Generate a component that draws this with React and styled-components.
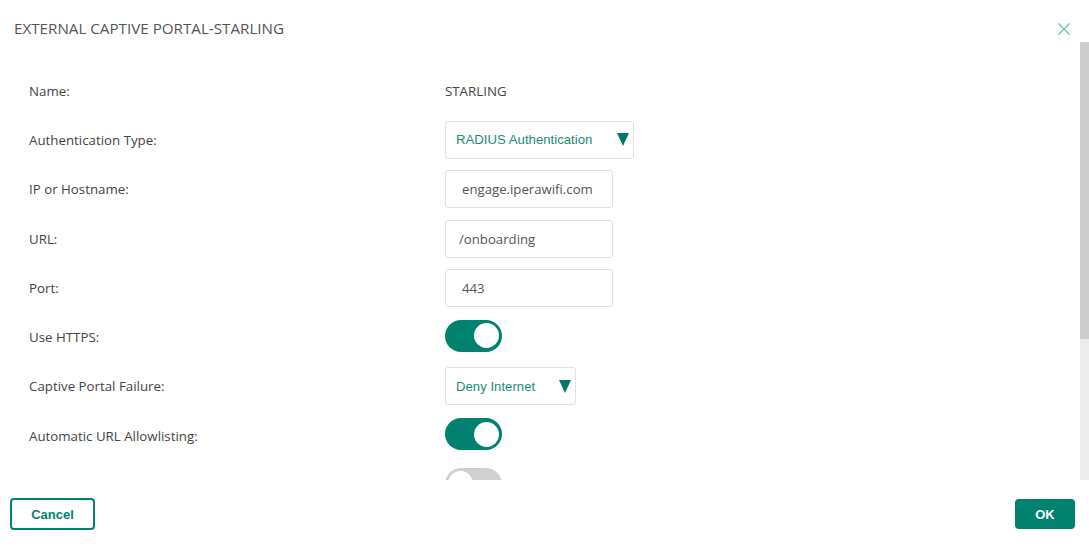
import React, { useState } from 'react'
import styled, { createGlobalStyle } from 'styled-components'

const GlobalStyle = createGlobalStyle`
  html, body {
    margin: 0;
    padding: 0;
    background: #fff;
    overflow: hidden;
  }
`

const teal = '#00826f'

const Dialog = styled.div`
  width: 1089px;
  height: 554px;
  display: flex;
  flex-direction: column;
  background: #fff;
  font-family: "Open Sans", "Liberation Sans", sans-serif;
`

const Header = styled.div`
  height: 42px;
  flex: none;
  display: flex;
  align-items: center;
  justify-content: space-between;
  padding: 0 18px 0 14px;
  box-sizing: border-box;
`

const Title = styled.h1`
  margin: 0;
  font-size: 15.2px;
  font-weight: 400;
  color: #555;
  padding-top: 14px;
`

const CloseButton = styled.button`
  border: 0;
  background: none;
  padding: 0;
  margin-top: 15px;
  width: 14px;
  height: 14px;
  display: flex;
  cursor: pointer;
`

const Content = styled.div`
  flex: 1;
  min-height: 0;
  display: flex;
`

const Body = styled.div`
  flex: 1;
  overflow: hidden;
  padding: 24px 0 0 29px;
  box-sizing: border-box;
`

const Rail = styled.div`
  width: 9px;
  flex: none;
  background: #ececec;
  display: flex;
  flex-direction: column;
`

const Thumb = styled.div`
  background: #cdcdcd;
`

const Form = styled.div`
  display: grid;
  grid-template-columns: 416px 1fr;
  grid-auto-rows: 49.3px;
`

const Label = styled.div`
  display: flex;
  align-items: center;
  font-size: 13.3px;
  color: #444;
`

const Field = styled.div`
  display: flex;
  align-items: center;
`

const Value = styled.span`
  font-size: 13.3px;
  color: #444;
`

const TextInput = styled.input`
  width: 168px;
  height: 38px;
  box-sizing: border-box;
  border: 1px solid #e0e0e0;
  border-radius: 3px;
  padding: 0 0 0 ${p => p.$indent || 16}px;
  font-family: "Open Sans", "Liberation Sans", sans-serif;
  font-size: 13.2px;
  color: #555;
  outline: none;
`

const SelectBox = styled.button`
  width: ${p => p.$width}px;
  height: 38px;
  box-sizing: border-box;
  border: 1px solid #e0e0e0;
  border-radius: 3px;
  background: #fff;
  padding: 0 4px 0 10px;
  display: flex;
  align-items: center;
  justify-content: space-between;
  font-family: "Liberation Sans", Arial, sans-serif;
  font-size: 13.2px;
  color: #1d8b7a;
  cursor: pointer;
`

const Caret = styled.span`
  width: 0;
  height: 0;
  border-left: 6px solid transparent;
  border-right: 6px solid transparent;
  border-top: 13px solid #00786a;
`

const Track = styled.span`
  width: 57px;
  height: 32px;
  margin-top: -3px;
  border-radius: 16px;
  background: ${p => (p.$on ? teal : '#d0d0d0')};
  display: flex;
  align-items: center;
  justify-content: ${p => (p.$on ? 'flex-end' : 'flex-start')};
  padding: 0 3px;
  box-sizing: border-box;
  cursor: pointer;
`

const Knob = styled.span`
  width: 25px;
  height: 25px;
  border-radius: 50%;
  background: #fff;
`

const Footer = styled.div`
  height: 74px;
  flex: none;
  display: flex;
  align-items: center;
  justify-content: space-between;
  padding: 0 14px 6px 10px;
  box-sizing: border-box;
`

const Button = styled.button`
  height: ${p => (p.$primary ? 30 : 32)}px;
  min-width: ${p => (p.$primary ? 60 : 85)}px;
  box-sizing: border-box;
  border-radius: 4px;
  border: 2px solid ${teal};
  background: ${p => (p.$primary ? teal : '#fff')};
  color: ${p => (p.$primary ? '#fff' : teal)};
  font-family: "Liberation Sans", Arial, sans-serif;
  font-weight: 700;
  font-size: 13px;
  cursor: pointer;
`

function Toggle({ on, onChange }) {
  return (
    <Track $on={on} onClick={() => onChange(!on)}>
      <Knob />
    </Track>
  )
}

function Select({ value, width }) {
  return (
    <SelectBox $width={width}>
      {value}
      <Caret />
    </SelectBox>
  )
}

const visibleShare = 0.678

export default function App() {
  const [https, setHttps] = useState(true)
  const [allowlist, setAllowlist] = useState(true)
  const [redirect, setRedirect] = useState(false)

  return (
    <Dialog>
      <GlobalStyle />
      <Header>
        <Title>EXTERNAL CAPTIVE PORTAL-STARLING</Title>
        <CloseButton aria-label="Close">
          <svg width="14" height="14" viewBox="0 0 14 14">
            <path d="M1.5 1.5 L12.5 12.5 M12.5 1.5 L1.5 12.5" stroke="#6cc1b3" strokeWidth="1.4" />
          </svg>
        </CloseButton>
      </Header>
      <Content>
        <Body>
          <Form>
            <Label>Name:</Label>
            <Field><Value>STARLING</Value></Field>

            <Label>Authentication Type:</Label>
            <Field><Select value="RADIUS Authentication" width={189} /></Field>

            <Label>IP or Hostname:</Label>
            <Field><TextInput defaultValue="engage.iperawifi.com" /></Field>

            <Label>URL:</Label>
            <Field><TextInput defaultValue="/onboarding" $indent={13} /></Field>

            <Label>Port:</Label>
            <Field><TextInput defaultValue="443" /></Field>

            <Label>Use HTTPS:</Label>
            <Field><Toggle on={https} onChange={setHttps} /></Field>

            <Label>Captive Portal Failure:</Label>
            <Field><Select value="Deny Internet" width={131} /></Field>

            <Label>Automatic URL Allowlisting:</Label>
            <Field><Toggle on={allowlist} onChange={setAllowlist} /></Field>

            <Label />
            <Field><Toggle on={redirect} onChange={setRedirect} /></Field>
          </Form>
        </Body>
        <Rail>
          <Thumb style={{ height: `${visibleShare * 100}%` }} />
        </Rail>
      </Content>
      <Footer>
        <Button>Cancel</Button>
        <Button $primary>OK</Button>
      </Footer>
    </Dialog>
  )
}
